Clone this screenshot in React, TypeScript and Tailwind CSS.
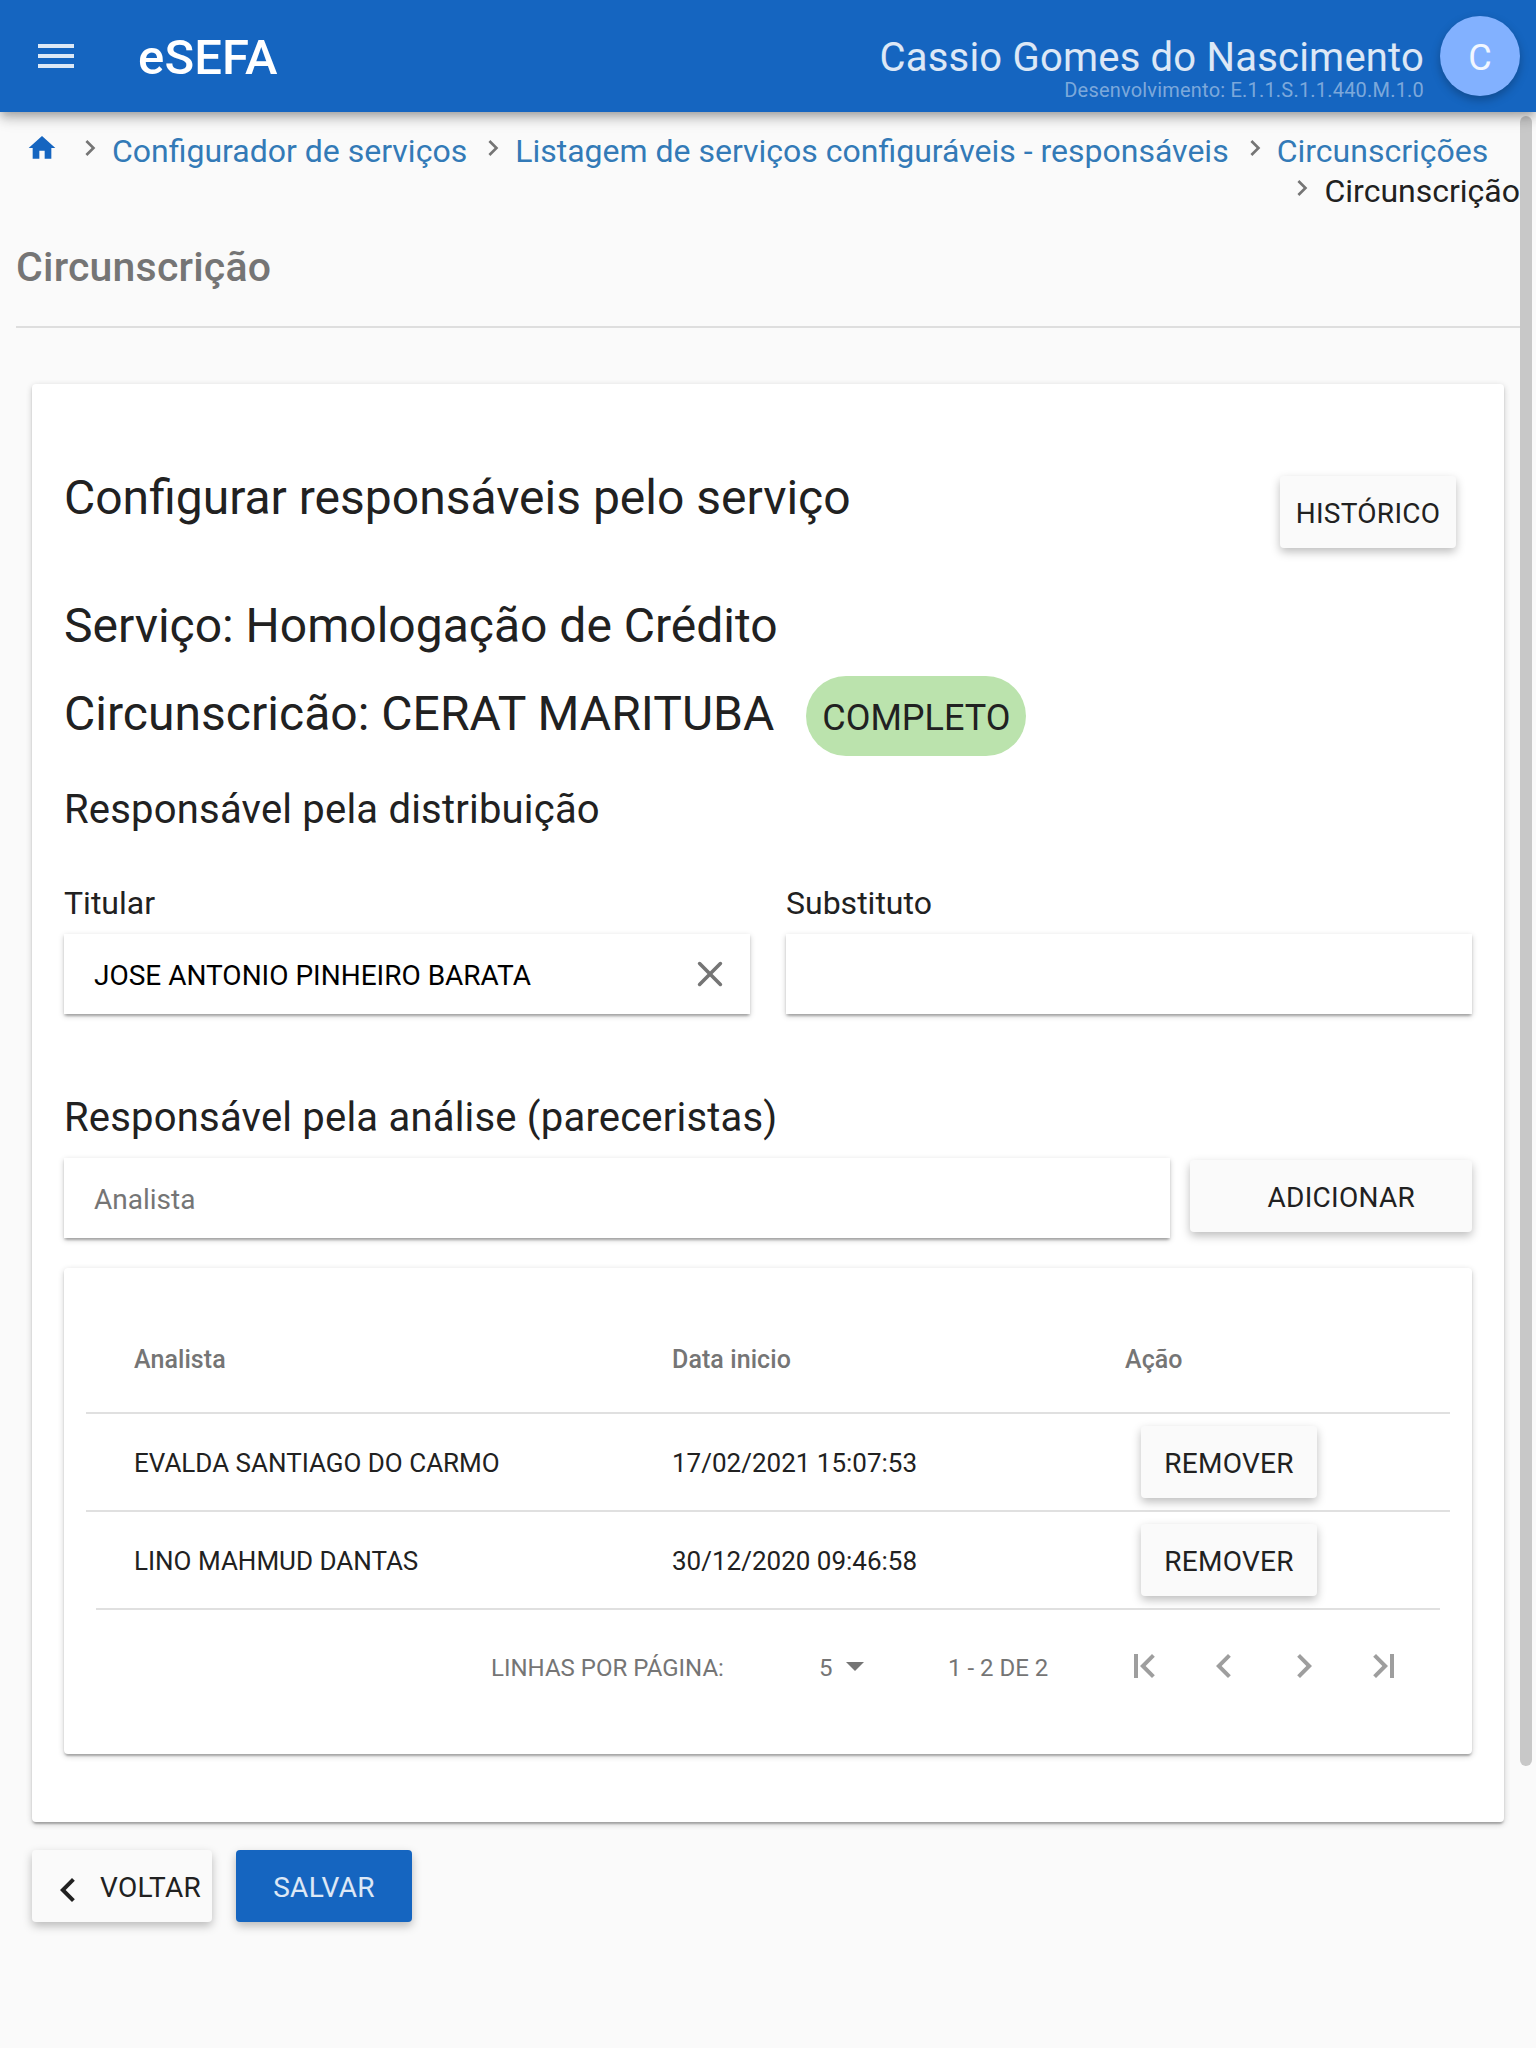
import React from "react";

const cardShadow =
  "shadow-[0_2px_6px_0_rgba(0,0,0,0.2),0_2px_2px_0_rgba(0,0,0,0.14),0_4px_2px_-2px_rgba(0,0,0,0.12)]";
const buttonShadow = "shadow-[0_4px_10px_0_rgba(0,0,0,0.26)]";

function Icon({ d, className }: { d: string; className: string }) {
  return (
    <svg viewBox="0 0 24 24" fill="currentColor" className={`shrink-0 ${className}`} aria-hidden="true">
      <path d={d} />
    </svg>
  );
}

const paths = {
  menu: "M3 18h18v-2H3v2zm0-5h18v-2H3v2zm0-7v2h18V6H3z",
  home: "M10 20v-6h4v6h5v-8h3L12 3 2 12h3v8z",
  right: "M10 6L8.59 7.41 13.17 12l-4.58 4.59L10 18l6-6z",
  left: "M15.41 7.41L14 6l-6 6 6 6 1.41-1.41L10.83 12z",
  first: "M7 6v12h2V6H7zm10.41 1.41L16 6l-6 6 6 6 1.41-1.41L12.83 12z",
  last: "M15 6v12h2V6h-2zM8 6L6.59 7.41 11.17 12l-4.58 4.59L8 18l6-6z",
};

function Crumb({ label, current = false }: { label: string; current?: boolean }) {
  return (
    <li className="flex items-start">
      <Icon d={paths.right} className="mt-px mr-1.5 size-8 text-[#757575]" />
      {current ? (
        <span className="text-[#212121]">{label}</span>
      ) : (
        <a className="text-[#337ab7]">{label}</a>
      )}
    </li>
  );
}

function RaisedButton({ children, className = "" }: { children: React.ReactNode; className?: string }) {
  return (
    <button
      type="button"
      className={`block h-[72px] rounded-[4px] bg-[#fafafa] pb-[18px] pt-[21px] text-[28px] leading-[33px] tracking-[0.01em] text-[#212121] ${buttonShadow} ${className}`}
    >
      {children}
    </button>
  );
}

function Field({ value, placeholder, clearable = false }: { value?: string; placeholder?: string; clearable?: boolean }) {
  return (
    <div className={`flex h-20 w-full items-start justify-between bg-white pl-[30px] ${cardShadow}`}>
      <span className="pt-[25px] text-[28px] leading-[33px]">
        {value ? <span className="text-black">{value}</span> : <span className="text-[#757575]">{placeholder}</span>}
      </span>
      {clearable && (
        <svg viewBox="0 0 26 26" className="mr-[27px] mt-[27px] size-[26px]" fill="none" stroke="#757575" strokeWidth="3.6" strokeLinecap="round" aria-hidden="true">
          <path d="M2.6 2.6l20.8 20.8M23.4 2.6L2.6 23.4" />
        </svg>
      )}
    </div>
  );
}

const rows = [
  { name: "EVALDA SANTIAGO DO CARMO", date: "17/02/2021 15:07:53" },
  { name: "LINO MAHMUD DANTAS", date: "30/12/2020 09:46:58" },
];

export default function App() {
  return (
    <div className="relative h-[2048px] w-[1536px] overflow-hidden bg-[#fafafa] font-['Roboto',sans-serif] text-[#212121]">
      <header className="relative z-20 flex h-28 items-start bg-[#1565c0] shadow-[0_4px_8px_-2px_rgba(0,0,0,0.2),0_8px_10px_0_rgba(0,0,0,0.14),0_2px_20px_0_rgba(0,0,0,0.12)]">
        <Icon d={paths.menu} className="ml-8 mt-8 size-12 text-white/85" />
        <h1 className="ml-[58px] mt-[29px] text-[49px] font-medium leading-[57px] tracking-[0.003em] text-white">eSEFA</h1>
        <div className="ml-auto mt-[34px] text-right">
          <div className="text-[40px] leading-[47px] tracking-[0.005em] text-white/85">Cassio Gomes do Nascimento</div>
          <div className="-mt-[3px] text-[20px] leading-6 tracking-[0.01em] text-white/45">
            Desenvolvimento: E.1.1.S.1.1.440.M.1.0
          </div>
        </div>
        <div className="mx-4 mt-4 h-20 w-20 rounded-full bg-[#82b1ff] pt-[21px] text-center text-[36px] leading-[42px] text-white/90 shadow-[0_4px_10px_0_rgba(0,0,0,0.26)]">
          C
        </div>
      </header>

      <div className="absolute left-[1520px] top-[116px] z-10 h-[1650px] w-3 rounded-full bg-[#c8c8c8]" />

      <div className="w-[1520px]">
        <nav className="pt-[19px] text-[32px] leading-10">
          <ol className="flex items-start gap-2.5 pl-[26px]">
            <li className="mr-1.5">
              <Icon d={paths.home} className="mt-px size-8 text-[#1565c0]" />
            </li>
            <Crumb label="Configurador de serviços" />
            <Crumb label="Listagem de serviços configuráveis - responsáveis" />
            <Crumb label="Circunscrições" />
          </ol>
          <ol className="flex justify-end">
            <Crumb label="Circunscrição" current />
          </ol>
        </nav>

        <div className="ml-4 mt-8 border-b-2 border-[#dedede] pb-[35px]">
          <h2 className="text-[41px] font-medium leading-[48px] tracking-[0.005em] text-[#757575]">Circunscrição</h2>
        </div>

        <main className={`ml-8 mr-4 mt-14 h-[1438px] rounded-[4px] bg-white px-8 pt-[85px] ${cardShadow}`}>
          <div className="flex items-start justify-between">
            <h3 className="text-[48px] leading-[57px]">Configurar responsáveis pelo serviço</h3>
            <RaisedButton className="mr-4 mt-[7px] w-44">HISTÓRICO</RaisedButton>
          </div>
          <h3 className="mt-[49px] text-[48px] leading-[57px]">Serviço: Homologação de Crédito</h3>
          <div className="mt-[22px] flex items-start gap-8">
            <h3 className="mt-[9px] text-[48px] leading-[57px] tracking-[0.0007em]">Circunscricão: CERAT MARITUBA</h3>
            <span className="h-20 w-[220px] rounded-full bg-[#bbe3ad] pt-[21px] text-center text-[36px] leading-[42px]">
              COMPLETO
            </span>
          </div>

          <h4 className="mt-[30px] text-[40px] leading-[47px] tracking-[0.005em]">Responsável pela distribuição</h4>
          <div className="mt-[50px] grid grid-cols-2 gap-9">
            <div>
              <label className="mb-[11px] block text-[32px] leading-10">Titular</label>
              <Field value="JOSE ANTONIO PINHEIRO BARATA" clearable />
            </div>
            <div>
              <label className="mb-[11px] block text-[32px] leading-10">Substituto</label>
              <Field />
            </div>
          </div>

          <h4 className="mt-20 text-[40px] leading-[47px] tracking-[0.005em]">Responsável pela análise (pareceristas)</h4>
          <div className="mt-[17px] flex items-start gap-5">
            <Field placeholder="Analista" />
            <RaisedButton className="mt-0.5 w-[282px] shrink-0 pl-[77.5px] text-left">ADICIONAR</RaisedButton>
          </div>

          <section className={`mt-[30px] h-[486px] rounded-[4px] bg-white ${cardShadow}`}>
            <div className="mx-[22px]">
              <div className="grid h-[146px] grid-cols-[538px_453px_1fr] border-b-2 border-[#e0e0e0] pl-12 pt-[77px] text-[25px] font-medium leading-[29px] tracking-[0.003em] text-[#757575]">
                <span>Analista</span>
                <span>Data inicio</span>
                <span>Ação</span>
              </div>
              {rows.map((row) => (
                <div
                  key={row.name}
                  className="grid h-[98px] grid-cols-[538px_453px_1fr] border-b-2 border-[#e0e0e0] pl-12 text-[26px] leading-[30px] last:mx-2.5 last:pl-[38px]"
                >
                  <span className="pt-[34px]">{row.name}</span>
                  <span className="pt-[34px]">{row.date}</span>
                  <RaisedButton className="ml-4 mt-3 w-44">REMOVER</RaisedButton>
                </div>
              ))}
            </div>
            <div className="flex items-start pl-[427px] pt-8 text-[24px] leading-7 text-[#757575]">
              <span className="w-[328px] pt-3">LINHAS POR PÁGINA:</span>
              <span className="w-[27px] pt-3">5</span>
              <svg viewBox="0 0 18 9" className="mr-[84px] mt-5 h-[9px] w-[18px]" fill="currentColor" aria-hidden="true">
                <path d="M0 0h18L9 9z" />
              </svg>
              <span className="w-[172px] pt-3">1 - 2 DE 2</span>
              <div className="flex gap-8 text-[#9e9e9e]">
                <Icon d={paths.first} className="size-12" />
                <Icon d={paths.left} className="size-12" />
                <Icon d={paths.right} className="size-12" />
                <Icon d={paths.last} className="size-12" />
              </div>
            </div>
          </section>
        </main>

        <div className="ml-8 mt-7 flex gap-6">
          <RaisedButton className="w-[180px]">
            <span className="flex items-start">
              <Icon d={paths.left} className="-mt-[5px] ml-3 mr-2 size-12" />
              VOLTAR
            </span>
          </RaisedButton>
          <button
            type="button"
            className={`h-[72px] w-44 rounded-[4px] bg-[#1565c0] pb-[18px] pt-[21px] text-[28px] leading-[33px] tracking-[0.01em] text-white/85 ${buttonShadow}`}
          >
            SALVAR
          </button>
        </div>
      </div>
    </div>
  );
}
